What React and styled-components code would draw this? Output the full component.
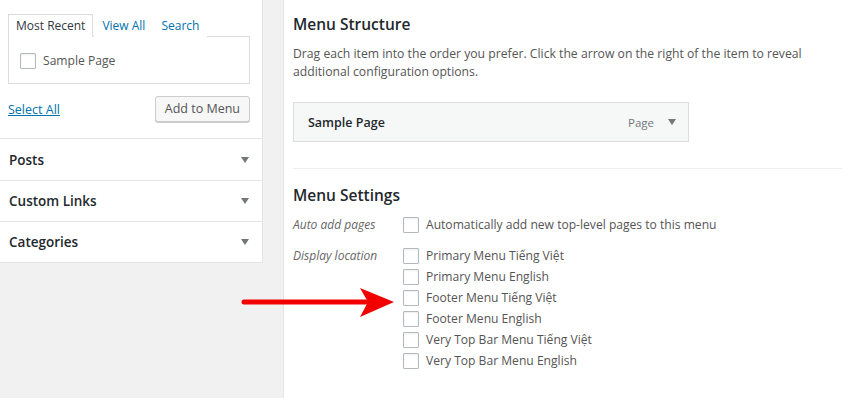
import styled, { createGlobalStyle } from "styled-components";

const GlobalStyle = createGlobalStyle`
  html, body {
    margin: 0;
    padding: 0;
    background: #f1f1f1;
  }
  body {
    font-family: "Open Sans", "Noto Sans", sans-serif;
    color: #444;
  }
`;

const Page = styled.div`
  display: flex;
  flex-direction: row;
  height: 398px;
  overflow: hidden;
  position: relative;
`;

const Sidebar = styled.div`
  width: 262px;
  align-self: flex-start;
  background: #fff;
  border-right: 1px solid #e5e5e5;
  border-bottom: 1px solid #e5e5e5;
`;

const TabsSection = styled.div`
  padding: 13px 12px 16px 8px;
  border-bottom: 1px solid #e5e5e5;
`;

const TabBar = styled.div`
  display: flex;
  align-items: flex-end;
  height: 23px;
`;

const Tab = styled.div`
  font-size: 12px;
  height: 23px;
  line-height: 22px;
  padding: 0 7px;
  box-sizing: border-box;
  color: ${(p) => (p.$active ? "#32373c" : "#0073aa")};
  border: 1px solid ${(p) => (p.$active ? "#dcdcde" : "transparent")};
  border-bottom: none;
  background: #fff;
  position: relative;
  margin-bottom: -1px;
  margin-right: ${(p) => (p.$active ? "1px" : "0")};
  z-index: 1;
`;

const TabPanel = styled.div`
  border: 1px solid #dcdcde;
  height: 48px;
  box-sizing: border-box;
  padding: 1px 11px 0;
  display: flex;
  align-items: center;
`;

const Box = styled.span`
  display: inline-block;
  width: 16px;
  height: 16px;
  box-sizing: border-box;
  border: 1px solid #b4b9be;
  border-radius: 1px;
  box-shadow: inset 0 1px 2px rgba(0, 0, 0, 0.07);
  background: #fff;
  flex-shrink: 0;
`;

const CheckLabel = styled.label`
  display: flex;
  align-items: center;
  gap: 7px;
  font-size: 12.1px;
  line-height: 16px;
  height: 16px;
  color: #555;
`;

const ActionRow = styled.div`
  display: flex;
  justify-content: space-between;
  align-items: center;
  margin-top: 12px;
`;

const LinkText = styled.a`
  font-size: 12.5px;
  color: #0073aa;
  text-decoration: underline;
`;

const Button = styled.button`
  font-family: inherit;
  font-size: 12.5px;
  color: #555;
  background: #f7f7f7;
  border: 1px solid #ccc;
  border-radius: 3px;
  box-shadow: 0 1px 0 #ccc;
  height: 26px;
  padding: 0 9px;
  line-height: 24px;
`;

const AccordionRow = styled.div`
  display: flex;
  justify-content: space-between;
  align-items: center;
  height: 41px;
  padding: 0 13px 0 9px;
  box-sizing: border-box;
  border-top: ${(p) => (p.$first ? "none" : "1px solid #e5e5e5")};
  font-size: 13.5px;
  font-weight: 600;
  color: #23282d;
`;

const Caret = styled.span`
  width: 0;
  height: 0;
  border-left: 4px solid transparent;
  border-right: 4px solid transparent;
  border-top: 6px solid #72777c;
`;

const Main = styled.div`
  flex: 1;
  margin-left: 20px;
  background: #fff;
  border-left: 1px solid #e5e5e5;
  padding: 14px 8px 0 9px;
`;

const Heading = styled.h3`
  font-size: 15.5px;
  font-weight: 600;
  color: #23282d;
  margin: 0;
  line-height: 20px;
`;

const Description = styled.p`
  font-size: 12.2px;
  line-height: 18px;
  color: #555;
  margin: 11px 0 0;
`;

const MenuItem = styled.div`
  width: 396px;
  height: 40px;
  box-sizing: border-box;
  margin-top: 21px;
  border: 1px solid #dcdcde;
  background: #f6f7f7;
  display: flex;
  align-items: center;
  padding: 0 12px 0 14px;
`;

const ItemTitle = styled.span`
  flex: 1;
  font-size: 12.5px;
  font-weight: 600;
  color: #23282d;
`;

const ItemType = styled.span`
  font-size: 11.5px;
  color: #72777c;
  margin-right: 14px;
`;

const Divider = styled.hr`
  border: none;
  border-top: 1px solid #eee;
  margin: 26px 0 0;
`;

const SettingsHeading = styled(Heading)`
  margin-top: 16px;
`;

const SettingsRow = styled.div`
  display: flex;
  margin-top: ${(p) => p.$mt}px;
`;

const FieldLabel = styled.div`
  width: 110px;
  font-size: 12px;
  font-style: italic;
  color: #666;
  line-height: 16px;
`;

const Options = styled.div`
  display: flex;
  flex-direction: column;
  gap: 5px;
`;

const ArrowMark = styled.svg`
  position: absolute;
  left: 240px;
  top: 287px;
`;

const locations = [
  "Primary Menu Tiếng Việt",
  "Primary Menu English",
  "Footer Menu Tiếng Việt",
  "Footer Menu English",
  "Very Top Bar Menu Tiếng Việt",
  "Very Top Bar Menu English",
];

const App = () => {
  return (
    <>
      <GlobalStyle />
      <Page>
        <Sidebar>
          <TabsSection>
            <TabBar>
              <Tab $active>Most Recent</Tab>
              <Tab>View All</Tab>
              <Tab>Search</Tab>
            </TabBar>
            <TabPanel>
              <CheckLabel>
                <Box />
                Sample Page
              </CheckLabel>
            </TabPanel>
            <ActionRow>
              <LinkText>Select All</LinkText>
              <Button>Add to Menu</Button>
            </ActionRow>
          </TabsSection>
          {["Posts", "Custom Links", "Categories"].map((name, i) => (
            <AccordionRow key={name} $first={i === 0}>
              {name}
              <Caret />
            </AccordionRow>
          ))}
        </Sidebar>
        <Main>
          <Heading>Menu Structure</Heading>
          <Description>
            Drag each item into the order you prefer. Click the arrow on the right of the item to reveal
            <br />
            additional configuration options.
          </Description>
          <MenuItem>
            <ItemTitle>Sample Page</ItemTitle>
            <ItemType>Page</ItemType>
            <Caret />
          </MenuItem>
          <Divider />
          <SettingsHeading>Menu Settings</SettingsHeading>
          <SettingsRow $mt={12}>
            <FieldLabel>Auto add pages</FieldLabel>
            <CheckLabel>
              <Box />
              Automatically add new top-level pages to this menu
            </CheckLabel>
          </SettingsRow>
          <SettingsRow $mt={15}>
            <FieldLabel>Display location</FieldLabel>
            <Options>
              {locations.map((loc) => (
                <CheckLabel key={loc}>
                  <Box />
                  {loc}
                </CheckLabel>
              ))}
            </Options>
          </SettingsRow>
        </Main>
        <ArrowMark width="156" height="32" viewBox="0 0 156 32">
          <line x1="4" y1="15" x2="126" y2="15" stroke="#f20000" strokeWidth="5" strokeLinecap="round" />
          <polygon points="120,1 154,15 120,30 128,15" fill="#f20000" />
        </ArrowMark>
      </Page>
    </>
  );
};

export default App;
